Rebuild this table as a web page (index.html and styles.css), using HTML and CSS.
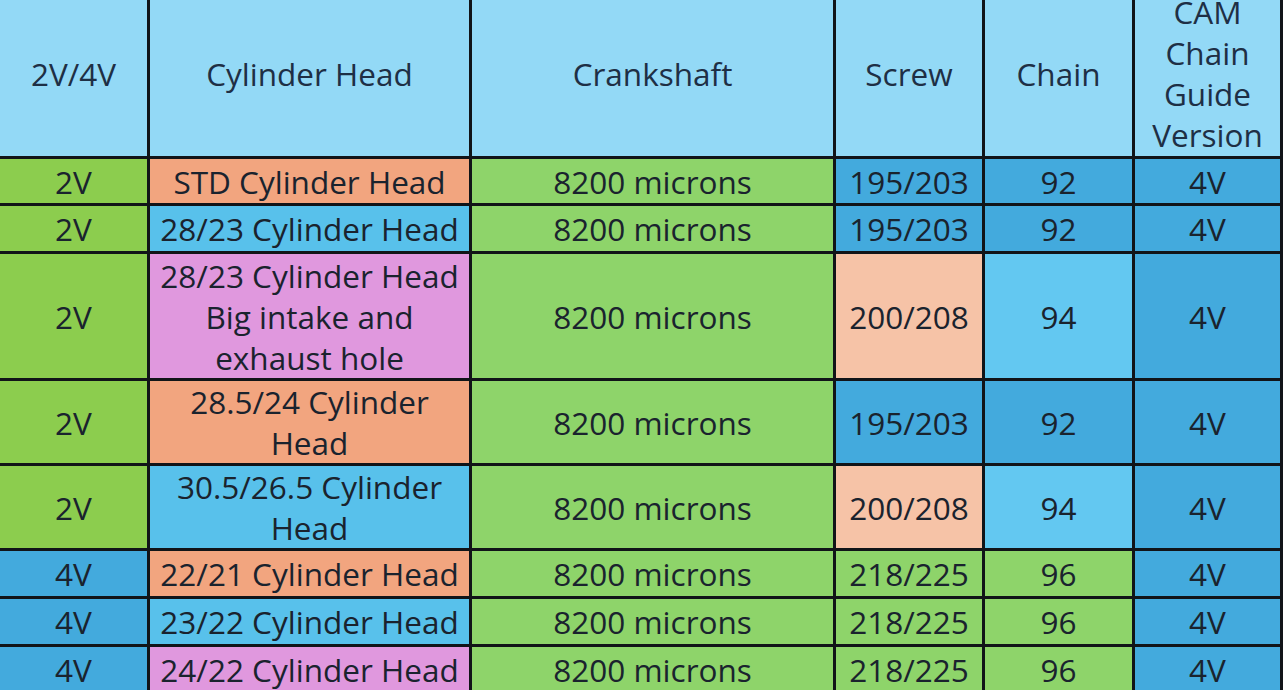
FILE: index.html
```html
<!DOCTYPE html>
<html lang="en">
<head>
<meta charset="utf-8">
<title>Cylinder Head Chart</title>
<link rel="stylesheet" href="styles.css">
</head>
<body>
<table class="chart">
  <colgroup>
    <col class="c1"><col class="c2"><col class="c3"><col class="c4"><col class="c5"><col class="c6">
  </colgroup>
  <thead>
    <tr class="r-head">
      <th>2V/4V</th>
      <th>Cylinder Head</th>
      <th>Crankshaft</th>
      <th>Screw</th>
      <th>Chain</th>
      <th>CAM<br>Chain<br>Guide<br>Version</th>
    </tr>
  </thead>
  <tbody>
    <tr class="r47">
      <td class="green2">2V</td>
      <td class="salmon">STD Cylinder Head</td>
      <td class="green">8200 microns</td>
      <td class="blue">195/203</td>
      <td class="blue">92</td>
      <td class="blue">4V</td>
    </tr>
    <tr class="r48">
      <td class="green2">2V</td>
      <td class="sky">28/23 Cylinder Head</td>
      <td class="green">8200 microns</td>
      <td class="blue">195/203</td>
      <td class="blue">92</td>
      <td class="blue">4V</td>
    </tr>
    <tr class="r127">
      <td class="green2">2V</td>
      <td class="pink">28/23 Cylinder Head<br>Big intake and<br>exhaust hole</td>
      <td class="green">8200 microns</td>
      <td class="peach">200/208</td>
      <td class="light">94</td>
      <td class="blue">4V</td>
    </tr>
    <tr class="r84">
      <td class="green2">2V</td>
      <td class="salmon">28.5/24 Cylinder<br>Head</td>
      <td class="green">8200 microns</td>
      <td class="blue">195/203</td>
      <td class="blue">92</td>
      <td class="blue">4V</td>
    </tr>
    <tr class="r84">
      <td class="green2">2V</td>
      <td class="sky">30.5/26.5 Cylinder<br>Head</td>
      <td class="green">8200 microns</td>
      <td class="peach">200/208</td>
      <td class="light">94</td>
      <td class="blue">4V</td>
    </tr>
    <tr class="r48">
      <td class="blue">4V</td>
      <td class="salmon">22/21 Cylinder Head</td>
      <td class="green">8200 microns</td>
      <td class="green">218/225</td>
      <td class="green">96</td>
      <td class="blue">4V</td>
    </tr>
    <tr class="r48">
      <td class="blue">4V</td>
      <td class="sky">23/22 Cylinder Head</td>
      <td class="green">8200 microns</td>
      <td class="green">218/225</td>
      <td class="green">96</td>
      <td class="blue">4V</td>
    </tr>
    <tr class="r48">
      <td class="blue">4V</td>
      <td class="pink">24/22 Cylinder Head</td>
      <td class="green">8200 microns</td>
      <td class="green">218/225</td>
      <td class="green">96</td>
      <td class="blue">4V</td>
    </tr>
  </tbody>
</table>
</body>
</html>
```
FILE: styles.css
```css
html, body {
  margin: 0;
  padding: 0;
  background: #ffffff;
  overflow: hidden;
}

.chart {
  margin-top: -10px;
  border-collapse: separate;
  border-spacing: 0;
  table-layout: fixed;
  width: 1283px;
  font-family: "Open Sans", "Noto Sans", sans-serif;
  font-size: 31.5px;
  line-height: 41px;
  color: #1a232e;
}

.c1 { width: 150px; }
.c2 { width: 322px; }
.c3 { width: 364px; }
.c4 { width: 149px; }
.c5 { width: 150px; }
.c6 { width: 148px; }

.chart th,
.chart td {
  padding: 0;
  text-align: center;
  vertical-align: middle;
  border-right: 3px solid #111418;
  border-bottom: 3px solid #111418;
  white-space: nowrap;
  overflow: hidden;
}

.chart th {
  font-weight: normal;
  background: #93d9f6;
  color: #1e2f45;
}

.r-head { height: 169px; }
.r47 { height: 47px; }
.r48 { height: 48px; }
.r84 { height: 84px; }
.r127 { height: 127px; }

.green2 { background: #8ccd4e; }
.green { background: #8ed46a; }
.salmon { background: #f2a57f; }
.sky { background: #58c1eb; }
.pink { background: #e098de; }
.peach { background: #f6c3a7; }
.blue { background: #43aadd; }
.light { background: #63c8f1; }
```
